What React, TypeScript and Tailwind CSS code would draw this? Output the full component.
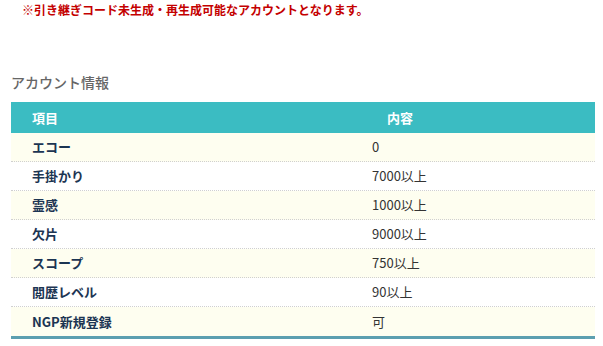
const rows = [
  { label: 'エコー', value: '0' },
  { label: '手掛かり', value: '7000以上' },
  { label: '霊感', value: '1000以上' },
  { label: '欠片', value: '9000以上' },
  { label: 'スコープ', value: '750以上' },
  { label: '閲歴レベル', value: '90以上' },
  { label: 'NGP新規登録', value: '可' },
];

export default function App() {
  return (
    <div className="w-[603px] h-[346px] bg-white font-['Noto_Sans_CJK_JP','Liberation_Sans',sans-serif] overflow-hidden">
      <p className="pl-[22px] text-[12px] leading-[20px] font-bold text-[#c40000]">
        ※引き継ぎコード未生成・再生成可能なアカウントとなります。
      </p>

      <h2 className="mt-[52px] pl-[11px] text-[14px] leading-[20px] font-medium text-[#666666]">アカウント情報</h2>

      {/* Table */}
      <div className="mt-[10px] ml-[11px] w-[584px] border-b-[3px] border-[#5c9fb0]">
        <div className="grid grid-cols-[351px_1fr] h-[31px] items-center bg-[#3bbcc2] text-white text-[13px] font-bold">
          <div className="pl-[21px]">項目</div>
          <div className="pl-[25px]">内容</div>
        </div>
        {rows.map((r, i) => (
          <div
            key={r.label}
            className={`grid grid-cols-[351px_1fr] h-[29px] items-center text-[13px] ${
              i < rows.length - 1 ? 'border-b border-dotted border-[#d0d0d0]' : ''
            } ${i % 2 === 0 ? 'bg-[#fefef0]' : 'bg-white'}`}
          >
            <div className="pl-[21px] font-bold text-[#1c3553]">{r.label}</div>
            <div className="pl-[10px] text-[#333333]">{r.value}</div>
          </div>
        ))}
      </div>
    </div>
  );
}
